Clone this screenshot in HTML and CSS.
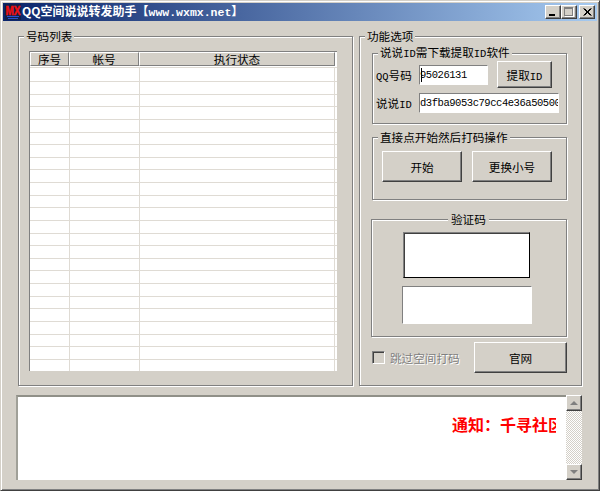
FILE: index.html
```html
<!DOCTYPE html>
<html lang="zh-CN">
<head>
    <meta charset="UTF-8">
    <meta name="viewport" content="width=device-width, initial-scale=1.0">
    <title>QQ空间说说转发助手</title>
    <link rel="stylesheet" href="styles.css">
</head>
<body>
    <div class="window">
        <div class="titlebar">
            <svg class="app-logo" viewBox="0 0 16 16" xmlns="http://www.w3.org/2000/svg">
                <rect width="16" height="16" fill="#10204a"/>
                <text x="0.5" y="10.5" textLength="15" lengthAdjust="spacingAndGlyphs" font-family="Liberation Sans" font-weight="700" font-size="12" fill="#f01010" stroke="#f01010" stroke-width="0.5">MX</text>
                <rect x="2" y="12" width="12" height="1" fill="#2a50d0"/>
                <rect x="3" y="14" width="10" height="1" fill="#2a50d0"/>
            </svg>
            <span class="title-text">QQ空间说说转发助手【<span class="latin">www.wxmx.net</span>】</span>
            <div class="window-controls">
                <button class="ctl ctl-min"><span></span></button>
                <button class="ctl ctl-max"><span></span></button>
                <button class="ctl ctl-close">
                    <svg viewBox="0 0 9 8" xmlns="http://www.w3.org/2000/svg">
                        <path d="M0.5 0.5L7.5 7.5M1.5 0.5L8.5 7.5M7.5 0.5L0.5 7.5M8.5 0.5L1.5 7.5" stroke="#000" stroke-width="1"/>
                    </svg>
                </button>
            </div>
        </div>

        <div class="main">
            <fieldset class="group list-group">
                <legend>号码列表</legend>
                <div class="list">
                    <div class="list-head">
                        <div class="col-head col-head-no">序号</div>
                        <div class="col-head col-head-account">帐号</div>
                        <div class="col-head col-head-status">执行状态</div>
                    </div>
                    <div class="list-row"><i></i><i></i><i></i></div>
                    <div class="list-row"><i></i><i></i><i></i></div>
                    <div class="list-row"><i></i><i></i><i></i></div>
                    <div class="list-row"><i></i><i></i><i></i></div>
                    <div class="list-row"><i></i><i></i><i></i></div>
                    <div class="list-row"><i></i><i></i><i></i></div>
                    <div class="list-row"><i></i><i></i><i></i></div>
                    <div class="list-row"><i></i><i></i><i></i></div>
                    <div class="list-row"><i></i><i></i><i></i></div>
                    <div class="list-row"><i></i><i></i><i></i></div>
                    <div class="list-row"><i></i><i></i><i></i></div>
                    <div class="list-row"><i></i><i></i><i></i></div>
                    <div class="list-row"><i></i><i></i><i></i></div>
                    <div class="list-row"><i></i><i></i><i></i></div>
                    <div class="list-row"><i></i><i></i><i></i></div>
                    <div class="list-row"><i></i><i></i><i></i></div>
                    <div class="list-row"><i></i><i></i><i></i></div>
                    <div class="list-row"><i></i><i></i><i></i></div>
                    <div class="list-row"><i></i><i></i><i></i></div>
                    <div class="list-row"><i></i><i></i><i></i></div>
                    <div class="list-row"><i></i><i></i><i></i></div>
                    <div class="list-row"><i></i><i></i><i></i></div>
                    <div class="list-row"><i></i><i></i><i></i></div>
                    <div class="list-row"><i></i><i></i><i></i></div>
                </div>
            </fieldset>

            <fieldset class="group options-group">
                <legend>功能选项</legend>

                <fieldset class="group sub-group id-group">
                    <legend>说说<span class="latin">ID</span>需下载提取<span class="latin">ID</span>软件</legend>
                    <div class="field-row">
                        <label class="field-label" for="qq"><span class="latin">QQ</span>号码</label>
                        <input class="text-input qq-input" id="qq" type="text" value="95026131">
                        <button class="btn fetch-btn">提取<span class="latin">ID</span></button>
                    </div>
                    <div class="field-row id-row">
                        <label class="field-label" for="sid">说说<span class="latin">ID</span></label>
                        <input class="text-input id-input" id="sid" type="text" value="d3fba9053c79cc4e36a50500">
                    </div>
                </fieldset>

                <fieldset class="group sub-group start-group">
                    <legend>直接点开始然后打码操作</legend>
                    <div class="start-btns">
                        <button class="btn start-btn">开始</button>
                        <button class="btn start-btn">更换小号</button>
                    </div>
                </fieldset>

                <fieldset class="group sub-group captcha-group">
                    <legend>验证码</legend>
                    <div class="captcha-img"></div>
                    <input class="text-input captcha-input" type="text">
                </fieldset>

                <div class="options-footer">
                    <label class="skip-check">
                        <input type="checkbox" disabled>
                        <span>跳过空间打码</span>
                    </label>
                    <button class="btn site-btn">官网</button>
                </div>
            </fieldset>
        </div>

        <div class="log">
            <div class="log-text">
                <div class="notice">通知：千寻社区</div>
            </div>
            <div class="scrollbar">
                <div class="scroll-btn"><span class="arrow-up"></span></div>
                <div class="scroll-track"></div>
                <div class="scroll-btn"><span class="arrow-down"></span></div>
            </div>
        </div>
    </div>
</body>
</html>
```

FILE: styles.css
```css
:root {
    --face: #d4d0c8;
    --shadow: #808080;
    --dark: #404040;
    --line: #dfdbd4;
}

* {
    margin: 0;
    padding: 0;
    box-sizing: border-box;
}

html, body {
    width: 600px;
    height: 491px;
    overflow: hidden;
}

body {
    font-family: "Noto Sans CJK SC", "Liberation Sans", sans-serif;
    font-size: 11.6px;
    color: #000;
    background: var(--face);
}

.latin {
    font-family: "Liberation Mono", monospace;
    font-size: 10.5px;
}

.window {
    width: 600px;
    height: 491px;
    padding: 2px;
    border: 1px solid;
    border-color: var(--face) var(--dark) var(--dark) var(--face);
    box-shadow: inset 1px 1px 0 #fff, inset -1px -1px 0 var(--shadow);
}

/* title bar */
.titlebar {
    display: flex;
    align-items: center;
    height: 18px;
    padding: 0 2px;
    background: linear-gradient(to right, #0a246a 0%, #a6caf0 100%);
    color: #fff;
    font-size: 12px;
    font-weight: 700;
    line-height: 18px;
}

.titlebar .latin {
    font-size: 11.5px;
}

.app-logo {
    width: 16px;
    height: 16px;
    margin-right: 1px;
}

.title-text {
    white-space: nowrap;
}

.window-controls {
    display: flex;
    margin-left: auto;
}

.ctl {
    display: flex;
    width: 16px;
    height: 14px;
    background: var(--face);
    border: 1px solid;
    border-color: #fff var(--dark) var(--dark) #fff;
    box-shadow: inset -1px -1px 0 var(--shadow);
}

.ctl-close {
    margin-left: 2px;
    align-items: center;
    justify-content: center;
}

.ctl-close svg {
    width: 9px;
    height: 8px;
}

.ctl-min span {
    width: 6px;
    height: 2px;
    margin: 8px 0 0 3px;
    background: #000;
}

.ctl-max span {
    width: 9px;
    height: 9px;
    margin: 1px 0 0 2px;
    border: 1px solid var(--shadow);
    border-top-width: 2px;
    box-shadow: 1px 1px 0 #fff;
}

/* group boxes */
.main {
    display: flex;
    gap: 6px;
    height: 357px;
    margin-top: 8px;
    padding: 0 15px 0 15px;
}

.group {
    min-width: 0;
    border: 1px solid var(--shadow);
    box-shadow: 1px 1px 0 #fff, inset 1px 1px 0 #fff;
}

.group legend {
    padding: 0 2px;
    line-height: 15px;
    background: var(--face);
}

.list-group {
    width: 335px;
    padding: 7px 0 0 10px;
}

.list-group legend {
    margin-left: -5px;
}

.options-group {
    width: 223px;
    padding: 2px 0 0 12px;
}

.options-group > legend {
    margin-left: -7px;
}

.sub-group {
    width: 195px;
}

.sub-group legend {
    line-height: 13px;
}

.id-group {
    height: 78px;
    padding-left: 3px;
}

.id-group legend {
    margin-left: 2px;
}

.start-group {
    height: 69px;
    margin-top: 7px;
    padding: 7px 0 0 9px;
}

.start-group legend {
    margin-left: -4px;
}

.captcha-group {
    display: flex;
    flex-direction: column;
    align-items: flex-start;
    width: 196px;
    height: 124px;
    margin: 13px 0 0 -1px;
    padding: 6px 0 0 31px;
}

.captcha-group legend {
    margin-left: 45px;
    padding: 0 3px;
}

/* number list */
.list {
    width: 308px;
    height: 320px;
    overflow: hidden;
    background: #fff;
    border-top: 1px solid var(--shadow);
    border-left: 1px solid var(--shadow);
}

.list-head {
    display: flex;
    height: 15px;
    border-bottom: 1px solid #fff;
}

.col-head {
    height: 14px;
    line-height: 13px;
    text-align: center;
    background: var(--face);
    border: 1px solid;
    border-color: #fff var(--shadow) var(--shadow) #fff;
}

.col-head-no {
    width: 39px;
}

.col-head-account {
    width: 70px;
}

.col-head-status {
    width: 196px;
}

.list-row {
    display: flex;
    height: 12.63px;
    border-top: 1px solid var(--line);
}

.list-head + .list-row {
    height: 14px;
}

.list-row i {
    border-right: 1px solid var(--line);
}

.list-row i:nth-child(1) {
    width: 40px;
}

.list-row i:nth-child(2) {
    width: 70px;
}

.list-row i:nth-child(3) {
    width: 195px;
}

/* form controls */
.field-row {
    display: flex;
    align-items: center;
}

.id-row {
    margin-top: 5px;
}

.field-label {
    width: 43px;
    white-space: nowrap;
}

.text-input {
    height: 20px;
    font-family: "Liberation Mono", monospace;
    font-size: 10.5px;
    letter-spacing: -0.45px;
    background-color: #fff;
    border: 1px solid;
    border-color: var(--shadow) #fff #fff var(--shadow);
    outline: none;
}

.qq-input {
    width: 69px;
    background-image: linear-gradient(#000, #000);
    background-repeat: no-repeat;
    background-position: 1px 2px;
    background-size: 1px 14px;
}

.id-input {
    width: 140px;
}

.captcha-img {
    width: 127px;
    height: 46px;
    background: #fff;
    border: 1px solid;
    border-color: var(--shadow) #000 #000 var(--shadow);
    box-shadow: inset 1px 1px 0 var(--dark);
}

.captcha-input {
    width: 130px;
    height: 38px;
    margin: 8px 0 0 -1px;
}

.btn {
    font-family: inherit;
    font-size: 11.6px;
    color: #000;
    background: var(--face);
    border: 1px solid;
    border-color: #fff var(--dark) var(--dark) #fff;
    box-shadow: inset -1px -1px 0 var(--shadow);
}

.fetch-btn {
    width: 55px;
    height: 27px;
    margin-left: 9px;
}

.start-btns {
    display: flex;
    gap: 10px;
}

.start-btn {
    width: 80px;
    height: 31px;
}

.options-footer {
    display: flex;
    align-items: center;
    width: 195px;
    margin-top: 5px;
}

.skip-check {
    display: flex;
    align-items: center;
    gap: 5px;
    color: var(--shadow);
    text-shadow: 1px 1px 0 #fff;
}

.skip-check input {
    appearance: none;
    width: 13px;
    height: 13px;
    border: 1px solid;
    border-color: var(--shadow) #fff #fff var(--shadow);
    box-shadow: inset 1px 1px 0 var(--dark);
}

.site-btn {
    width: 93px;
    height: 31px;
    margin-left: auto;
}

/* notice box */
.log {
    display: flex;
    width: 566px;
    height: 85px;
    margin: 9px 0 0 13px;
    background: #fff;
    border-top: 2px solid #909088;
    border-left: 2px solid #a0a098;
}

.log-text {
    flex: 1;
    min-width: 0;
    padding: 17px 10px 0 434px;
}

.notice {
    overflow: hidden;
    white-space: nowrap;
    font-size: 16px;
    font-weight: 700;
    line-height: 20px;
    color: #ff0000;
}

.scrollbar {
    display: flex;
    flex: none;
    flex-direction: column;
    width: 16px;
    margin-top: -2px;
}

.scroll-btn {
    display: flex;
    flex: none;
    align-items: center;
    justify-content: center;
    height: 16px;
    background: var(--face);
    border: 1px solid;
    border-color: #fff var(--dark) var(--dark) #fff;
    box-shadow: inset -1px -1px 0 var(--shadow);
}

.arrow-up,
.arrow-down {
    width: 0;
    height: 0;
    border-left: 4px solid transparent;
    border-right: 4px solid transparent;
}

.arrow-up {
    border-bottom: 4px solid var(--shadow);
}

.arrow-down {
    border-top: 4px solid var(--shadow);
}

.scroll-track {
    flex: 1;
    background: repeating-conic-gradient(var(--face) 0 25%, #fff 0 50%) 0 0 / 2px 2px;
}
```
